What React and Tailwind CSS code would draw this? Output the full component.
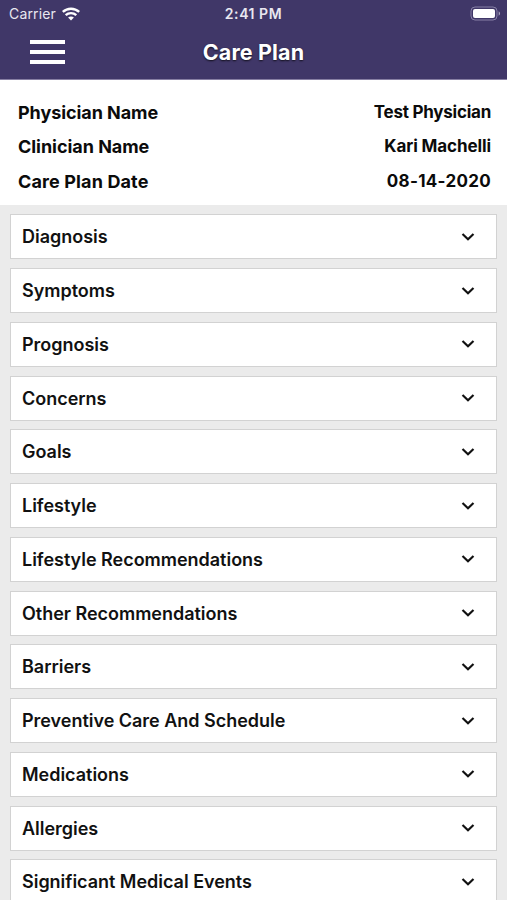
import React from "react";

const details = [
  { label: "Physician Name", value: "Test Physician", height: "h-[34px]", labelSpacing: "tracking-[-0.07px]", valueSpacing: "tracking-[-0.25px]" },
  { label: "Clinician Name", value: "Kari Machelli", height: "h-[35px]", labelSpacing: "tracking-[-0.04px]", valueSpacing: "tracking-[-0.1px]" },
  { label: "Care Plan Date", value: "08-14-2020", height: "h-[35px]", labelSpacing: "tracking-[0.13px]", valueSpacing: "tracking-[0.3px]" },
];

const sections = [
  "Diagnosis",
  "Symptoms",
  "Prognosis",
  "Concerns",
  "Goals",
  "Lifestyle",
  "Lifestyle Recommendations",
  "Other Recommendations",
  "Barriers",
  "Preventive Care And Schedule",
  "Medications",
  "Allergies",
  "Significant Medical Events",
];

function WifiIcon() {
  return (
    <svg width="18" height="14" viewBox="0 0 18 14" fill="none" stroke="white" strokeWidth="2.4">
      <path d="M.8 4.9C5.4.6 12.6.6 17.2 4.9" />
      <path d="M3.7 8.2c3-2.8 7.6-2.8 10.6 0" />
      <path d="M6.1 10.6c1.7-1.5 4.1-1.5 5.8 0L9 13.5z" fill="white" stroke="none" />
    </svg>
  );
}

function BatteryIcon() {
  return (
    <svg width="31" height="15" viewBox="0 0 31 15" fill="none">
      <rect x="1" y="1" width="26" height="13" rx="4" stroke="#8780a6" />
      <rect x="3" y="3" width="22" height="9" rx="2" fill="white" />
      <path d="M28.7 5.3c1.8.8 1.8 3.6 0 4.4z" fill="#aaa5c0" />
    </svg>
  );
}

function StatusBar() {
  return (
    <div className="grid h-[27px] grid-cols-3 items-center pr-[6px] pl-[9px] text-[14px] text-[#e9e7f0]">
      <div className="flex items-center gap-[6px]">
        <span className="tracking-[0.15px]">Carrier</span>
        <WifiIcon />
      </div>
      <span className="pr-[3px] text-center text-[14px] font-semibold tracking-[0.55px] whitespace-nowrap">2:41 PM</span>
      <div className="flex justify-end">
        <BatteryIcon />
      </div>
    </div>
  );
}

function Header() {
  return (
    <header className="h-[80px] shrink-0 border-b border-[#877fa3] bg-[#403768]">
      <StatusBar />
      <div className="grid h-[49px] grid-cols-[1fr_auto_1fr] items-center px-[30px]">
        <button aria-label="Menu" className="flex w-[35px] flex-col gap-[6px]">
          <span className="h-[4px] bg-white" />
          <span className="h-[4px] bg-white" />
          <span className="h-[4px] bg-white" />
        </button>
        <h1 className="pt-px text-[21.5px] font-bold tracking-[0.15px] text-white [text-shadow:0_1px_2px_rgba(0,0,0,0.75)]">Care Plan</h1>
      </div>
    </header>
  );
}

function Section({ title }) {
  return (
    <button className="flex h-[45px] shrink-0 items-center justify-between border border-[#d2d2d2] bg-white pr-[21px] pl-[11px] text-[#111]">
      <span className="text-[18px] font-semibold tracking-[-0.02px]">{title}</span>
      <svg width="14" height="10" viewBox="0 0 14 10" fill="none" stroke="currentColor" strokeWidth="2.2">
        <path d="M1.5 2 7 7.2 12.5 2" />
      </svg>
    </button>
  );
}

export default function App() {
  return (
    <div className="flex h-[900px] flex-col overflow-hidden bg-[#ebebeb] font-['Inter','Liberation_Sans',sans-serif]">
      <Header />
      <dl className="h-[125px] shrink-0 bg-white pt-[15px] pr-4 pl-[18px] text-[#0b0b0b]">
        {details.map((row) => (
          <div key={row.label} className={`flex items-center justify-between ${row.height}`}>
            <dt className={`text-[18px] font-bold ${row.labelSpacing}`}>{row.label}</dt>
            <dd className={`pt-px text-[17px] font-bold ${row.valueSpacing}`}>{row.value}</dd>
          </div>
        ))}
      </dl>
      <main className="flex flex-col gap-[8.75px] px-[10px] pt-[9.25px]">
        {sections.map((title) => (
          <Section key={title} title={title} />
        ))}
      </main>
    </div>
  );
}
